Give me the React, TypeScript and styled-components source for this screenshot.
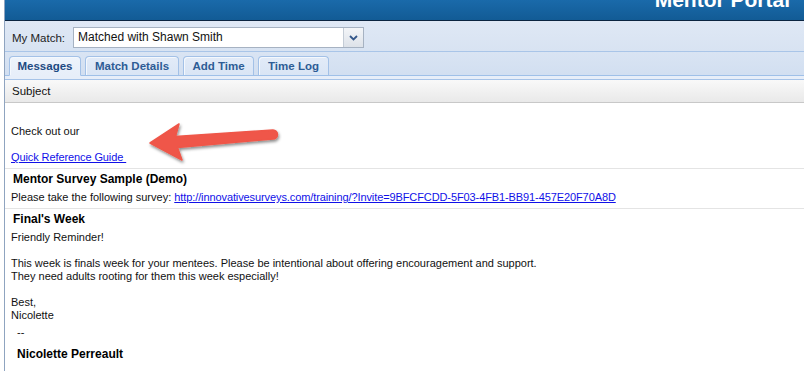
import React from "react";
import styled, { createGlobalStyle } from "styled-components";

const Global = createGlobalStyle`
  *, *::before, *::after { box-sizing: border-box; }
  html, body { margin: 0; padding: 0; background: #ffffff; }
  body { font-family: "Liberation Sans", Arial, sans-serif; color: #111; }
`;

const Page = styled.div`
  margin-left: 4px;
  border-left: 1px solid #8fa4c0;
  min-height: 371px;
  display: flex;
  flex-direction: column;
  background: #fff;
`;

const Header = styled.div`
  height: 21px;
  border-bottom: 1px solid #0b2440;
  background: linear-gradient(#1a6aaa, #125b95);
  display: flex;
  justify-content: flex-end;
  overflow: hidden;
  padding-right: 14px;
`;

const Title = styled.div`
  font-size: 21px;
  font-weight: bold;
  line-height: 21px;
  color: #fff;
  margin-top: -11px;
  white-space: nowrap;
`;

const Toolbar = styled.div`
  height: 31px;
  padding: 6px 0 3px 7px;
  border-bottom: 1px solid #a9c5e8;
  background: linear-gradient(#dfe8f5, #d8e3f2);
  display: flex;
  align-items: center;
  gap: 8px;
`;

const Label = styled.span`
  font-size: 11.5px;
  color: #222;
`;

const Select = styled.div`
  width: 291px;
  height: 21px;
  border: 1px solid #a6b2c2;
  background: #fff;
  display: flex;
  align-items: stretch;
`;

const SelectText = styled.div`
  flex: 1;
  font-size: 12px;
  line-height: 19px;
  padding-left: 4px;
  color: #111;
`;

const DropButton = styled.div`
  width: 20px;
  border-left: 1px solid #c4ccd6;
  background: linear-gradient(#f3f5f8, #dde2e9);
  display: flex;
  align-items: center;
  justify-content: center;
`;

const TabStrip = styled.div`
  height: 24px;
  border-bottom: 1px solid #9fc0e8;
  background: linear-gradient(#d9e4f3, #d2dff1);
  display: flex;
  align-items: flex-end;
  padding-left: 4px;
  gap: 4px;
`;

const Tab = styled.div<{ $active?: boolean; $w: number }>`
  width: ${(p) => p.$w}px;
  height: ${(p) => (p.$active ? 20 : 19)}px;
  margin-bottom: ${(p) => (p.$active ? -1 : 0)}px;
  border: 1px solid #a3c1e7;
  border-bottom: ${(p) => (p.$active ? "1px solid #e7eef9" : "none")};
  border-radius: 4px 4px 0 0;
  box-shadow: inset 1px 1px 0 #f4f8fd;
  background: ${(p) =>
    p.$active
      ? "linear-gradient(#eef4fc, #e7eef9)"
      : "linear-gradient(#e2ebf8, #d9e5f5)"};
  color: ${(p) => (p.$active ? "#1d4a82" : "#2d5c95")};
  font-size: 11.5px;
  font-weight: bold;
  line-height: 18px;
  text-align: center;
  white-space: nowrap;
`;

const TabGap = styled.div`
  height: 4px;
  background: #e7eef9;
  border-bottom: 1px solid #a6c3e8;
`;

const ColumnHeader = styled.div`
  height: 23px;
  border-bottom: 1px solid #c8c8c8;
  background: linear-gradient(#f9f9f9, #e9e9e9);
  font-size: 11.5px;
  line-height: 22px;
  padding-left: 7px;
  color: #111;
`;

const MessageList = styled.div`
  position: relative;
  flex: 1;
`;

const Message = styled.div<{ $last?: boolean }>`
  padding: 3px 0 4px 0;
  border-bottom: ${(p) => (p.$last ? "none" : "1px solid #e4e4e4")};
`;

const MsgTitle = styled.div`
  min-height: 14px;
  font-size: 12px;
  font-weight: bold;
  line-height: 14px;
  padding-left: 8px;
  margin-bottom: 5px;
  color: #000;
`;

const MsgBody = styled.div`
  font-size: 11px;
  line-height: 13px;
  padding-left: 6px;
  color: #111;
`;

const Link = styled.a`
  color: #1010e8;
  text-decoration: underline;
  letter-spacing: -0.1px;
`;

const Signature = styled.div`
  padding-left: 6px;
  margin-top: 4px;
`;

const SigName = styled.div`
  font-size: 12px;
  font-weight: bold;
  line-height: 14px;
  margin-top: 8px;
  color: #000;
`;

const ArrowWrap = styled.svg`
  position: absolute;
  left: 135px;
  top: 12px;
  overflow: visible;
`;

const tabs = [
  { label: "Messages", w: 72, active: true },
  { label: "Match Details", w: 94 },
  { label: "Add Time", w: 71 },
  { label: "Time Log", w: 71 },
];

export default function App() {
  return (
    <>
      <Global />
      <Page>
        <Header>
          <Title>Mentor Portal</Title>
        </Header>
        <Toolbar>
          <Label>My Match:</Label>
          <Select>
            <SelectText>Matched with Shawn Smith</SelectText>
            <DropButton>
              <svg width="9" height="6" viewBox="0 0 9 6">
                <path d="M1 1 L4.5 4.5 L8 1" fill="none" stroke="#34578a" strokeWidth="1.8" />
              </svg>
            </DropButton>
          </Select>
        </Toolbar>
        <TabStrip>
          {tabs.map((t) => (
            <Tab key={t.label} $active={t.active} $w={t.w}>
              {t.label}
            </Tab>
          ))}
        </TabStrip>
        <TabGap />
        <ColumnHeader>Subject</ColumnHeader>
        <MessageList>
          <Message>
            <MsgTitle />
            <MsgBody>
              Check out our
              <br />
              <br />
              <Link href="#">Quick Reference Guide&nbsp;</Link>
            </MsgBody>
          </Message>
          <Message>
            <MsgTitle>Mentor Survey Sample (Demo)</MsgTitle>
            <MsgBody>
              Please take the following survey:{" "}
              <Link href="#">
                http://innovativesurveys.com/training/?Invite=9BFCFCDD-5F03-4FB1-BB91-457E20F70A8D
              </Link>
            </MsgBody>
          </Message>
          <Message $last>
            <MsgTitle>Final's Week</MsgTitle>
            <MsgBody>
              Friendly Reminder!
              <br />
              <br />
              This week is finals week for your mentees. Please be intentional about offering
              encouragement and support.
              <br />
              They need adults rooting for them this week especially!
              <br />
              <br />
              Best,
              <br />
              Nicolette
              <Signature>
                --
                <SigName>Nicolette Perreault</SigName>
              </Signature>
            </MsgBody>
          </Message>
          <ArrowWrap width="150" height="50" viewBox="0 0 150 50">
            <defs>
              <filter id="sh" x="-20%" y="-40%" width="140%" height="180%">
                <feDropShadow dx="1" dy="2" stdDeviation="1.5" floodColor="#000" floodOpacity="0.45" />
              </filter>
            </defs>
            <path
              d="M10 28 L39 9 L35.5 21.5 L133 15 A4.5 4.5 0 0 1 133 24 L37.5 32.5 L42 45 Z"
              fill="#ef5648"
              stroke="#ef5648"
              strokeWidth="1.5"
              strokeLinejoin="round"
              filter="url(#sh)"
            />
          </ArrowWrap>
        </MessageList>
      </Page>
    </>
  );
}
